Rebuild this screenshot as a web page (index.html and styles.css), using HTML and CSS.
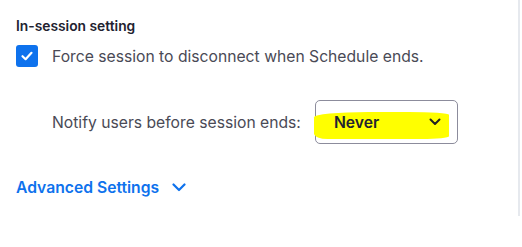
FILE: index.html
```html
<!DOCTYPE html>
<html>

<head>
	<title>In-session setting</title>
	<link rel="stylesheet" href="styles.css">
</head>

<body>
	<div class="panel">
		<div class="section-title">In-session setting</div>

		<label class="check-row">
			<span class="checkbox">
				<svg width="14" height="14" viewBox="0 0 14 14">
					<path d="M2.5 7.2 L5.6 10.2 L11.5 3.8" fill="none" stroke="#fff" stroke-width="2.2" stroke-linecap="round" stroke-linejoin="round" />
				</svg>
			</span>
			<span class="check-label">Force session to disconnect when Schedule ends.</span>
		</label>

		<div class="notify-row">
			<span class="notify-label">Notify users before session ends:</span>
			<div class="select">
				<span class="highlight"></span>
				<span class="select-value">Never</span>
				<svg class="select-arrow" width="12" height="8" viewBox="0 0 12 8">
					<path d="M1.5 1.5 L6 6 L10.5 1.5" fill="none" stroke="#222" stroke-width="2" stroke-linecap="round" stroke-linejoin="round" />
				</svg>
			</div>
		</div>

		<div class="advanced">
			<span>Advanced Settings</span>
			<svg width="14" height="9" viewBox="0 0 14 9">
				<path d="M1.5 1.5 L7 7 L12.5 1.5" fill="none" stroke="#0e72ed" stroke-width="2.2" stroke-linecap="round" stroke-linejoin="round" />
			</svg>
		</div>
	</div>
</body>

</html>
```

FILE: styles.css
```css
body {
	font-family: Inter, "Noto Sans", sans-serif;
	margin: 0;
	background-color: #fff;
}

.panel {
	width: 520px;
	height: 216px;
	box-sizing: border-box;
	padding: 17px 0 0 16px;
	border-right: 2px solid #e6e9ee;
}

.section-title {
	font-size: 13.8px;
	font-weight: 600;
	color: #222230;
	line-height: 18px;
}

.check-row {
	display: flex;
	align-items: center;
	gap: 14px;
	margin-top: 10px;
}

.checkbox {
	width: 22px;
	height: 22px;
	border-radius: 3px;
	background-color: #0e72ed;
	display: flex;
	align-items: center;
	justify-content: center;
}

.check-label {
	font-size: 15.7px;
	color: #4a4a56;
}

.notify-row {
	display: flex;
	align-items: center;
	gap: 14px;
	margin-top: 33px;
	padding-left: 36px;
}

.notify-label {
	font-size: 15.7px;
	color: #4a4a56;
}

.select {
	position: relative;
	width: 143px;
	height: 44px;
	box-sizing: border-box;
	border: 1px solid #8c8c9c;
	border-radius: 5px;
	display: flex;
	align-items: center;
	padding: 0 16px 0 18px;
}

.highlight {
	position: absolute;
	left: -2px;
	top: 11px;
	width: 135px;
	height: 27px;
	background-color: #ffff00;
	border-radius: 40% 30% 20% 10% / 20% 10% 10% 20%;
}

.select-value {
	position: relative;
	flex: 1;
	font-size: 15.7px;
	font-weight: 600;
	color: #222230;
}

.select-arrow {
	position: relative;
}

.advanced {
	display: flex;
	align-items: center;
	gap: 13px;
	margin-top: 34px;
	font-size: 15.7px;
	font-weight: 600;
	color: #0e72ed;
}
```
